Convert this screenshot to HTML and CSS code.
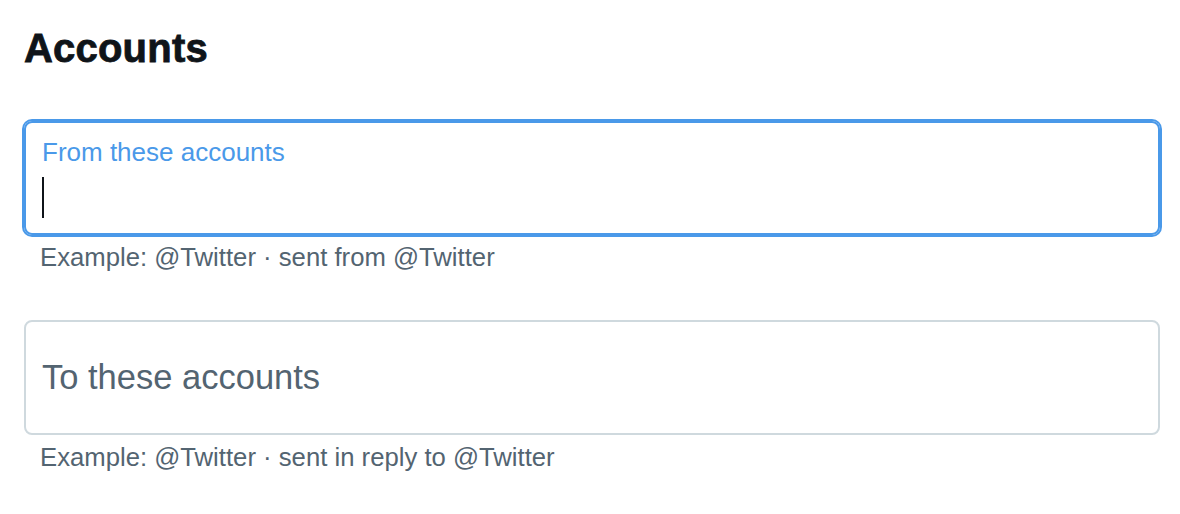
FILE: index.html
```html
<!DOCTYPE html>
<html>
<head>
<meta charset="utf-8">
<link rel="stylesheet" href="styles.css">
</head>
<body>
<div class="page">
  <h2 class="title">Accounts</h2>
  <div class="group">
    <div class="field focused">
      <div class="label">From these accounts</div>
      <div class="input"><span class="caret"></span></div>
    </div>
    <div class="help">Example: @Twitter · sent from @Twitter</div>
  </div>
  <div class="group second">
    <div class="field">
      <div class="placeholder">To these accounts</div>
    </div>
    <div class="help">Example: @Twitter · sent in reply to @Twitter</div>
  </div>
</div>
</body>
</html>
```
FILE: styles.css
```css
html, body {
  margin: 0;
  padding: 0;
  background: #ffffff;
}
.page {
  width: 1180px;
  height: 514px;
  box-sizing: border-box;
  padding: 24px 20px 0 24px;
  font-family: "Liberation Sans", Arial, sans-serif;
}
.title {
  margin: 0;
  font-size: 40px;
  line-height: 48px;
  font-weight: 700;
  color: #0f1419;
  -webkit-text-stroke: 0.8px #0f1419;
  letter-spacing: 0.2px;
}
.group {
  margin-top: 49px;
}
.group.second {
  margin-top: 47px;
}
.field {
  box-sizing: border-box;
  width: 1136px;
  height: 115px;
  border: 2px solid #cfd9de;
  border-radius: 8px;
  padding: 13px 16px 0 16px;
  display: flex;
  flex-direction: column;
}
.field.focused {
  height: 114px;
  border-color: #4a99e9;
  box-shadow: 0 0 0 2px #4a99e9;
}
.label {
  font-size: 26px;
  line-height: 32px;
  color: #4a99e9;
}
.input {
  margin-top: 9px;
  height: 41px;
  display: flex;
}
.caret {
  width: 2px;
  height: 41px;
  background: #0f1419;
}
.placeholder {
  font-size: 34.5px;
  line-height: 40px;
  color: #536471;
  margin-top: 22px;
}
.help {
  padding: 6px 0 0 16px;
  font-size: 25.7px;
  line-height: 32px;
  color: #536471;
}
```
